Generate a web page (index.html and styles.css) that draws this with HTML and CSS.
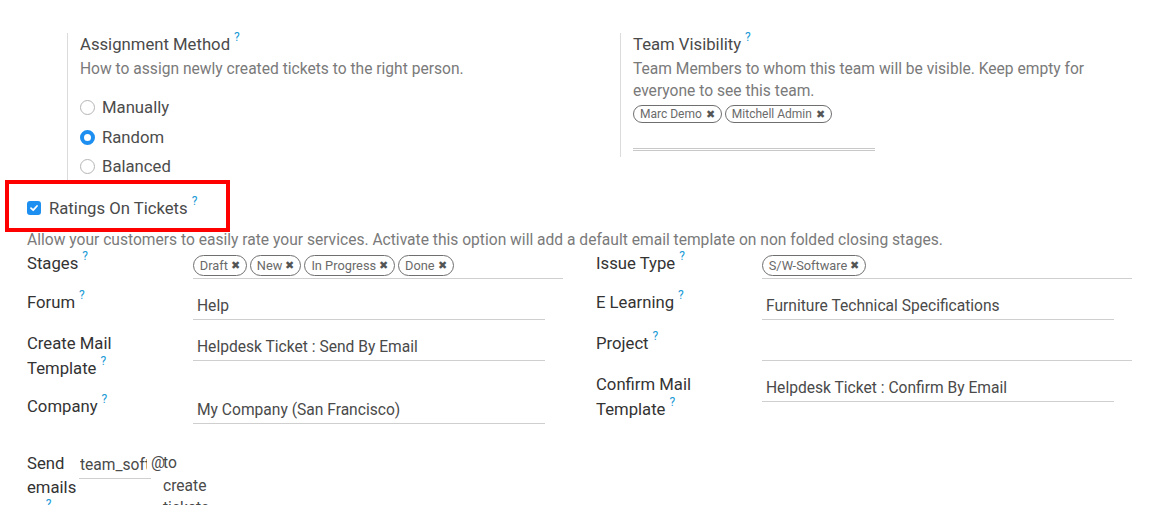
FILE: index.html
```html
<!DOCTYPE html>
<html>
<head>
<meta charset="utf-8">
<link rel="stylesheet" href="styles.css">
</head>
<body>
<div class="page">
  <div class="top">
    <div class="setting setting-left">
      <div class="s-title">Assignment Method<sup class="q">?</sup></div>
      <div class="s-desc">How to assign newly created tickets to the right person.</div>
      <div class="radios">
        <div class="radio-row"><span class="radio"></span><span>Manually</span></div>
        <div class="radio-row"><span class="radio on"></span><span>Random</span></div>
        <div class="radio-row"><span class="radio"></span><span>Balanced</span></div>
      </div>
    </div>
    <div class="setting setting-right">
      <div class="s-title">Team Visibility<sup class="q">?</sup></div>
      <div class="s-desc">Team Members to whom this team will be visible. Keep empty for<br>everyone to see this team.</div>
      <div class="tags small">
        <span class="tag">Marc Demo <span class="x">✖</span></span>
        <span class="tag">Mitchell Admin <span class="x">✖</span></span>
      </div>
      <div class="double-line"></div>
    </div>
  </div>

  <div class="check-row">
    <span class="checkbox"><svg width="10" height="10" viewBox="0 0 10 10"><path d="M2 5.2 L4.2 7.2 L8 3" fill="none" stroke="#fff" stroke-width="1.8" stroke-linecap="round" stroke-linejoin="round"/></svg></span>
    <span class="check-label">Ratings On Tickets<sup class="q">?</sup></span>
  </div>
  <div class="ratings-desc">Allow your customers to easily rate your services. Activate this option will add a default email template on non folded closing stages.</div>

  <div class="fields">
    <div class="col">
      <div class="frow">
        <div class="flabel">Stages<sup class="q">?</sup></div>
        <div class="fval wide tagfield">
          <span class="tag">Draft <span class="x">✖</span></span><span class="tag">New <span class="x">✖</span></span><span class="tag">In Progress <span class="x">✖</span></span><span class="tag">Done <span class="x">✖</span></span>
        </div>
      </div>
      <div class="frow">
        <div class="flabel">Forum<sup class="q">?</sup></div>
        <div class="fval">Help</div>
      </div>
      <div class="frow">
        <div class="flabel">Create Mail Template<sup class="q">?</sup></div>
        <div class="fval">Helpdesk Ticket : Send By Email</div>
      </div>
      <div class="frow">
        <div class="flabel">Company<sup class="q">?</sup></div>
        <div class="fval">My Company (San Francisco)</div>
      </div>
    </div>
    <div class="col">
      <div class="frow">
        <div class="flabel">Issue Type<sup class="q">?</sup></div>
        <div class="fval wide tagfield">
          <span class="tag">S/W-Software <span class="x">✖</span></span>
        </div>
      </div>
      <div class="frow">
        <div class="flabel">E Learning<sup class="q">?</sup></div>
        <div class="fval">Furniture Technical Specifications</div>
      </div>
      <div class="frow">
        <div class="flabel">Project<sup class="q">?</sup></div>
        <div class="fval wide"></div>
      </div>
      <div class="frow">
        <div class="flabel">Confirm Mail Template<sup class="q">?</sup></div>
        <div class="fval">Helpdesk Ticket : Confirm By Email</div>
      </div>
    </div>
  </div>

  <div class="alias-row">
    <div class="alias-label">Send emails to<sup class="q">?</sup></div>
    <div class="alias-input"><span class="alias-text">team_software</span></div>
    <div class="alias-at">@</div>
    <div class="alias-domain">to create tickets</div>
  </div>
</div>
</body>
</html>
```
FILE: styles.css
```css
html, body {
  margin: 0;
  padding: 0;
  background: #fff;
  overflow: hidden;
}
body {
  font-family: Roboto, "Noto Sans", sans-serif;
  color: #4c4c4c;
  font-size: 16.7px;
}
.page {
  width: 1156px;
  height: 505px;
  overflow: hidden;
  padding-top: 33px;
  box-sizing: border-box;
}
.q {
  color: #1a9ad6;
  font-size: 12px;
  margin-left: 4px;
  vertical-align: 0;
  position: relative;
  top: -9px;
}
.top {
  display: flex;
  padding-left: 67px;
}
.setting {
  border-left: 1px solid #dcdcdc;
  padding-left: 12px;
}
.setting-left {
  width: 540px;
  height: 149px;
}
.setting-right {
  width: 480px;
  height: 124px;
}
.s-title {
  line-height: 24px;
  font-size: 16.7px;
  color: #4a4a4a;
}
.s-desc {
  font-size: 15.6px;
  line-height: 22px;
  color: #7a7a7a;
}
.radios {
  margin-top: 13px;
}
.radio-row {
  display: flex;
  align-items: center;
  height: 29.5px;
  gap: 7px;
  font-size: 16.7px;
}
.radio {
  width: 15px;
  height: 15px;
  border-radius: 50%;
  border: 1px solid #b5b5b5;
  box-sizing: border-box;
  background: #fff;
}
.radio.on {
  border: 4.5px solid #1c8ff0;
  background: #fff;
}
.tags {
  display: flex;
  gap: 3px;
  align-items: center;
}
.tags.small {
  margin-top: 3px;
}
.tag {
  display: inline-flex;
  align-items: center;
  border: 1px solid #6f6f6f;
  border-radius: 10px;
  color: #6a6a6a;
  white-space: nowrap;
  box-sizing: border-box;
}
.tags.small .tag {
  font-size: 12px;
  height: 18px;
  padding: 0 6px;
}
.x {
  color: #555;
  font-size: 10.5px;
  margin-left: 4px;
}
.double-line {
  width: 242px;
  margin-top: 25px;
  border-bottom: 3px double #c8c8c8;
}
.check-row {
  position: relative;
  display: flex;
  align-items: center;
  gap: 8px;
  margin-left: 27px;
  margin-top: 14px;
  height: 24px;
  width: 200px;
}
.check-row::after {
  content: "";
  position: absolute;
  left: -22px;
  top: -16px;
  width: 225px;
  height: 52px;
  border: 4px solid #ff0000;
  box-sizing: border-box;
}
.checkbox {
  width: 14px;
  height: 14px;
  border-radius: 3px;
  background: #1c8ff0;
  display: flex;
  align-items: center;
  justify-content: center;
}
.check-label {
  font-size: 16.7px;
  color: #4a4a4a;
}
.ratings-desc {
  margin-left: 27px;
  margin-top: 10px;
  font-size: 15.6px;
  line-height: 21px;
  color: #7a7a7a;
  white-space: nowrap;
}
.fields {
  display: flex;
  gap: 33px;
  padding-left: 27px;
}
.col {
  width: 536px;
}
.frow {
  display: flex;
  align-items: flex-start;
  margin-bottom: 11px;
}
.flabel {
  width: 126px;
  padding-right: 40px;
  line-height: 25px;
  font-size: 16.7px;
  color: #333;
}
.fval {
  width: 352px;
  box-sizing: border-box;
  padding: 4px 4px 0;
  line-height: 25px;
  height: 30px;
  border-bottom: 1px solid #cfcfcf;
  font-size: 15.6px;
  color: #4a4a4a;
  white-space: nowrap;
}
.fval.wide {
  width: 371px;
}
.tagfield {
  display: flex;
  gap: 3px;
  align-items: center;
  padding: 4px 0 2px 0;
  line-height: normal;
  height: 28px;
}
.tagfield .tag {
  font-size: 12.8px;
  height: 21px;
  padding: 0 6px;
  border-radius: 11px;
}
.tagfield .x {
  margin-left: 3px;
}
.alias-row {
  display: flex;
  align-items: flex-start;
  padding-left: 27px;
  margin-top: 17px;
  font-size: 16.7px;
  line-height: 24px;
}
.alias-label {
  width: 50px;
  color: #333;
}
.alias-input {
  width: 71px;
  margin-left: 2px;
  border-bottom: 1px solid #cfcfcf;
  padding: 2px 0 2px 1px;
  line-height: 22px;
  font-size: 15.6px;
  color: #4a4a4a;
}
.alias-text {
  display: block;
  width: 67px;
  overflow: hidden;
  white-space: nowrap;
}
.alias-at {
  color: #4a4a4a;
  font-size: 15.6px;
  line-height: 22px;
}
.alias-domain {
  width: 48px;
  margin-left: -2px;
  font-size: 15.6px;
  color: #4a4a4a;
  line-height: 22.5px;
}
```
